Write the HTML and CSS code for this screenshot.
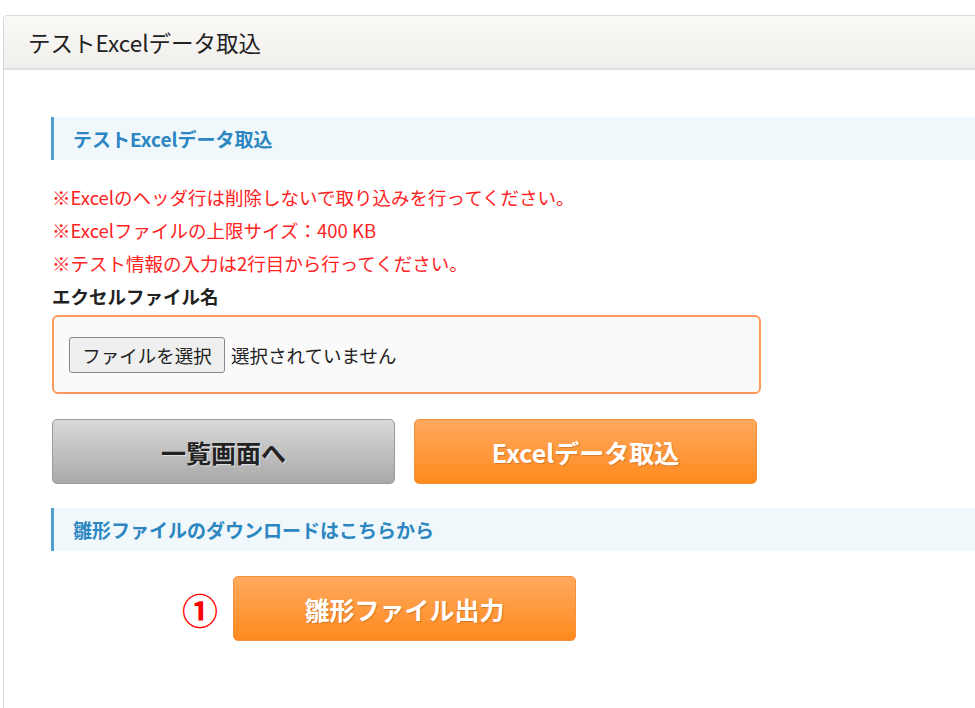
FILE: index.html
```html
<!DOCTYPE html>
<html lang="ja">
<head>
<meta charset="utf-8">
<title>テストExcelデータ取込</title>
<link rel="stylesheet" href="styles.css">
</head>
<body>
<div class="panel">
  <div class="panel-header">テストExcelデータ取込</div>
  <div class="panel-body">
    <h2 class="section-title">テストExcelデータ取込</h2>
    <ul class="notes">
      <li>※Excelのヘッダ行は削除しないで取り込みを行ってください。</li>
      <li>※Excelファイルの上限サイズ：400 KB</li>
      <li>※テスト情報の入力は2行目から行ってください。</li>
    </ul>
    <div class="field-label">エクセルファイル名</div>
    <div class="file-box">
      <span class="file-btn">ファイルを選択</span>
      <span class="file-status">選択されていません</span>
    </div>
    <div class="btn-row">
      <button class="btn btn-gray">一覧画面へ</button>
      <button class="btn btn-orange">Excelデータ取込</button>
    </div>
    <h2 class="section-title">雛形ファイルのダウンロードはこちらから</h2>
    <div class="btn-row single">
      <span class="mark">①</span>
      <button class="btn btn-orange">雛形ファイル出力</button>
    </div>
  </div>
</div>
</body>
</html>
```

FILE: styles.css
```css
html, body {
  margin: 0;
  padding: 0;
  overflow: hidden;
  background: #ffffff;
}

body {
  font-family: "Noto Sans CJK JP", "Noto Sans", sans-serif;
  color: #222;
}

.panel {
  margin: 15px -30px 0 3px;
  border: 1px solid #d9d9d9;
  border-radius: 4px 4px 0 0;
  height: 720px;
}

.panel-header {
  height: 52px;
  line-height: 52px;
  padding-left: 24px;
  font-size: 22.5px;
  color: #222;
  background: linear-gradient(#faf9f7, #f1efeb);
  border-bottom: 2px solid #dedede;
  border-radius: 4px 4px 0 0;
}

.panel-body {
  padding: 47px 0 0 47px;
}

.section-title {
  margin: 0;
  height: 43px;
  line-height: 43px;
  padding-left: 19px;
  border-left: 3px solid #4ea0cf;
  background: #f0f8fb;
  color: #2c86c2;
  font-size: 19px;
  font-weight: bold;
}

.notes {
  list-style: none;
  margin: 21px 0 0 1px;
  padding: 0;
  color: #ff2222;
  font-size: 18.5px;
  line-height: 33px;
}

.field-label {
  margin-left: 1px;
  font-size: 18.5px;
  font-weight: bold;
  line-height: 33px;
  color: #222;
}

.file-box {
  margin: 2px 0 0 1px;
  width: 709px;
  height: 79px;
  box-sizing: border-box;
  border: 2px solid #ff985a;
  border-radius: 6px;
  background: #fafafa;
  display: flex;
  align-items: center;
  padding-left: 15px;
  gap: 6px;
}

.file-btn {
  display: inline-flex;
  align-items: center;
  justify-content: center;
  width: 156px;
  height: 36px;
  box-sizing: border-box;
  border: 1px solid #8a8a8a;
  border-radius: 3px;
  background: #efefef;
  font-size: 18.5px;
  color: #222;
}

.file-status {
  font-size: 18.5px;
  color: #222;
}

.btn-row {
  display: flex;
  gap: 19px;
  margin: 25px 0 24px 1px;
}

.btn-row.single {
  align-items: center;
  padding-left: 130px;
  gap: 15px;
}

.btn {
  width: 343px;
  height: 65px;
  border-radius: 5px;
  font-family: "Noto Sans CJK JP", "Noto Sans", sans-serif;
  font-size: 25px;
  font-weight: bold;
  cursor: pointer;
}

.btn-gray {
  background: linear-gradient(#d9d9d9, #a9a9a9);
  border: 1px solid #9a9a9a;
  color: #222;
  text-shadow: 1px 1px 1px rgba(255, 255, 255, 0.6);
}

.btn-orange {
  background: linear-gradient(#ffa95e, #ff8a1e);
  border: 1px solid #f8923a;
  color: #ffffff;
  text-shadow: 1px 1px 1px rgba(160, 80, 20, 0.45);
}

.mark {
  color: #ff0000;
  font-size: 36px;
  font-weight: bold;
  line-height: 1;
  width: 36px;
}
```
